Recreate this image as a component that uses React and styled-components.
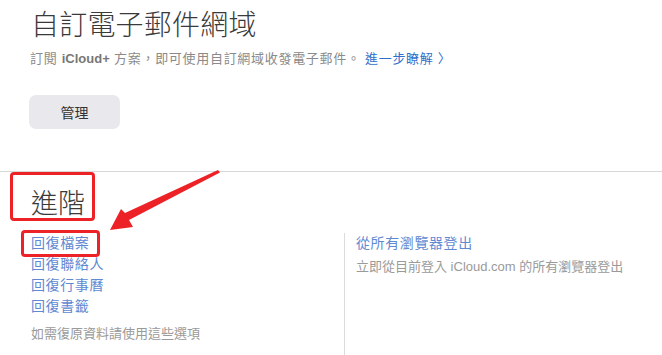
import React from 'react';
import styled, { createGlobalStyle } from 'styled-components';

const GlobalStyle = createGlobalStyle`
  html, body {
    margin: 0;
    padding: 0;
    background: #fff;
  }
  body {
    font-family: 'Liberation Sans', 'Noto Sans CJK TC', sans-serif;
    color: #333;
  }
`;

const Page = styled.div`
  position: relative;
  width: 662px;
  height: 355px;
  overflow: hidden;
`;

const Top = styled.section`
  padding: 12px 0 0 31px;
`;

const Title = styled.h1`
  margin: 0;
  font-size: 28px;
  line-height: 28px;
  font-weight: 200;
  color: #3a3a3a;
  letter-spacing: 0.2px;
`;

const Lead = styled.p`
  margin: 11px 0 0 -1px;
  font-size: 13px;
  line-height: 16px;
  color: #8a8a8a;
  letter-spacing: 0.7px;

  b {
    font-weight: 700;
    color: #777;
    letter-spacing: 0;
  }
`;

const Link = styled.a`
  color: ${({ $strong }) => ($strong ? '#2f6fcc' : '#6189d2')};
  text-decoration: none;
  cursor: pointer;
`;

const Button = styled.button`
  display: block;
  margin: 28px 0 0 -2px;
  width: 91px;
  height: 34px;
  border: none;
  border-radius: 7px;
  background: #e8e8ed;
  font-family: inherit;
  font-size: 14px;
  color: #333;
`;

const Divider = styled.hr`
  margin: 42px 0 0;
  border: none;
  border-top: 1px solid #d8d8d8;
`;

const Advanced = styled.section`
  padding: 18px 0 0 31px;
`;

const Heading = styled.h2`
  margin: 0;
  font-size: 27px;
  line-height: 28px;
  font-weight: 200;
  color: #3a3a3a;
`;

const Columns = styled.div`
  display: grid;
  grid-template-columns: 313px 1fr;
  margin-top: 15px;
  height: 140px;
`;

const Column = styled.div`
  display: flex;
  flex-direction: column;
  align-items: flex-start;
  ${({ $bordered }) =>
    $bordered &&
    `
    border-left: 1px solid #dcdcdc;
    padding-left: 11px;
  `}
`;

const ItemLink = styled(Link)`
  font-size: 14px;
  line-height: 21px;
  letter-spacing: 0.6px;
`;

const Note = styled.p`
  margin: ${({ $gap }) => $gap}px 0 0;
  font-size: 13px;
  line-height: 16px;
  color: #9a9a9a;
  letter-spacing: 0;
`;

const Mark = styled.div`
  position: absolute;
  border: 3px solid #ec2227;
  border-radius: 4px;
  pointer-events: none;
`;

const Arrow = styled.svg`
  position: absolute;
  left: 0;
  top: 0;
  pointer-events: none;
`;

const restoreItems = ['回復檔案', '回復聯絡人', '回復行事曆', '回復書籤'];

export default function App() {
  return (
    <Page>
      <GlobalStyle />
      <Top>
        <Title>自訂電子郵件網域</Title>
        <Lead>
          訂閱 <b>iCloud+</b> 方案，即可使用自訂網域收發電子郵件。{' '}
          <Link $strong>進一步瞭解 〉</Link>
        </Lead>
        <Button>管理</Button>
      </Top>
      <Divider />
      <Advanced>
        <Heading>進階</Heading>
        <Columns>
          <Column>
            {restoreItems.map((item) => (
              <ItemLink key={item}>{item}</ItemLink>
            ))}
            <Note $gap={9}>如需復原資料請使用這些選項</Note>
          </Column>
          <Column $bordered>
            <ItemLink>從所有瀏覽器登出</ItemLink>
            <Note $gap={5}>立即從目前登入 iCloud.com 的所有瀏覽器登出</Note>
          </Column>
        </Columns>
      </Advanced>

      <Mark style={{ left: 10, top: 172, width: 79, height: 43 }} />
      <Mark style={{ left: 21, top: 230, width: 73, height: 21 }} />
      <Arrow width="662" height="355" viewBox="0 0 662 355">
        <polygon
          points="218,170 220,172.5 129,220 133,227 110,230 121,209 125,213"
          fill="#ec2227"
        />
      </Arrow>
    </Page>
  );
}
